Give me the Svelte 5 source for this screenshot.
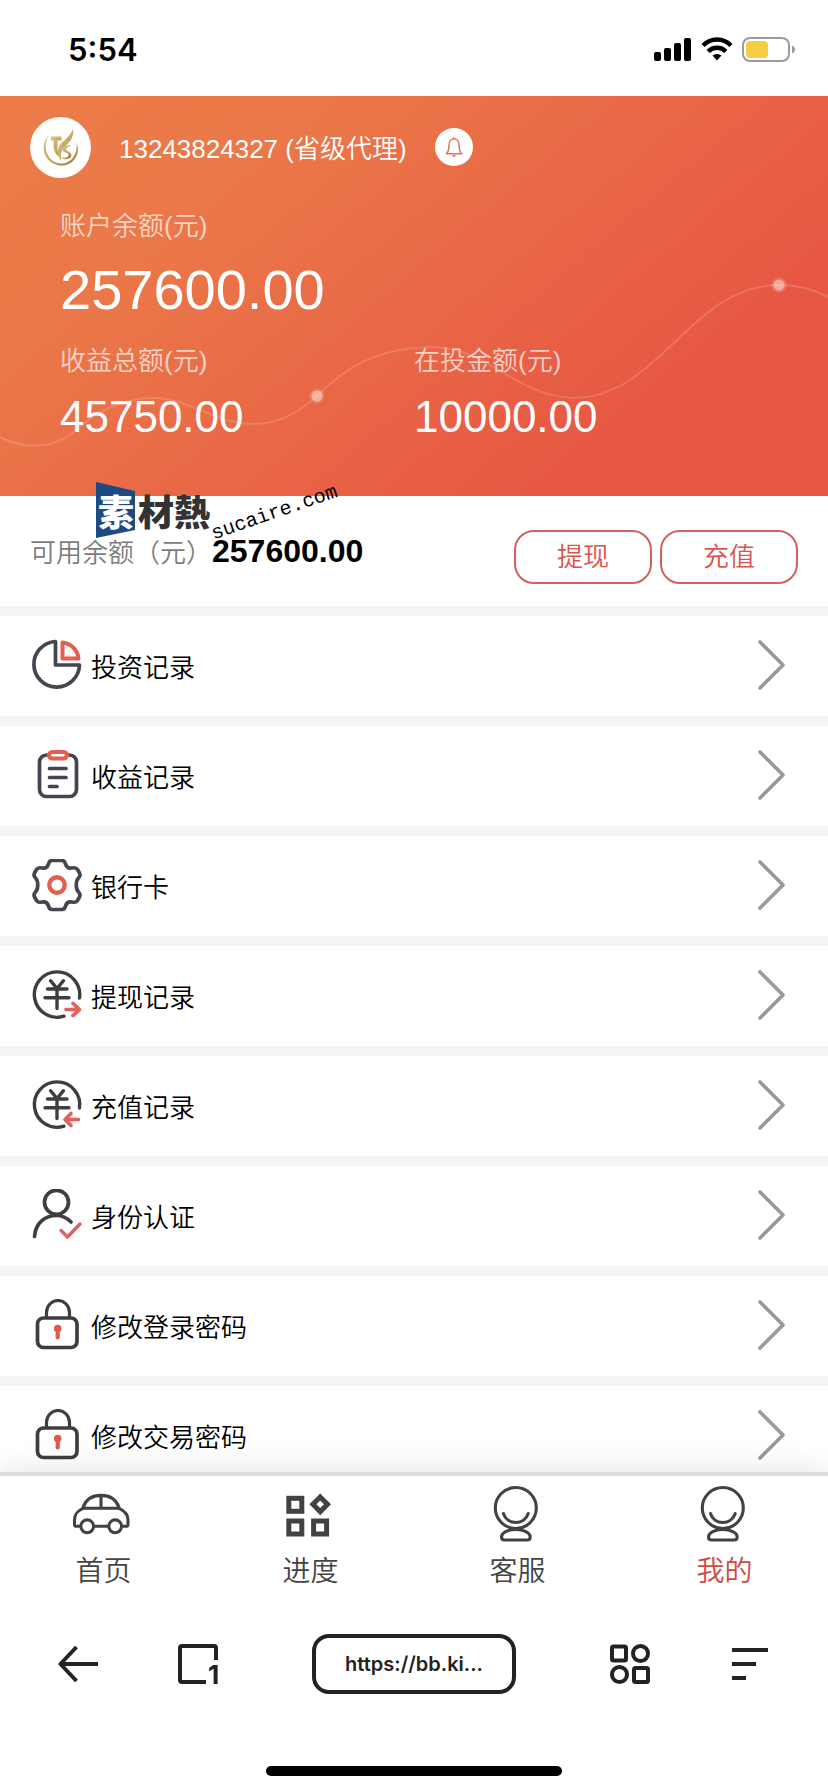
<script>
  const dark = '#45454f';
  const records = [
    { id: 'pie', label: '投资记录' },
    { id: 'clipboard', label: '收益记录' },
    { id: 'gear', label: '银行卡' },
    { id: 'withdraw', label: '提现记录' },
    { id: 'deposit', label: '充值记录' },
    { id: 'person', label: '身份认证' },
    { id: 'lock', label: '修改登录密码' },
    { id: 'lock', label: '修改交易密码' }
  ];
  const tabs = [
    { id: 'car', label: '首页' },
    { id: 'blocks', label: '进度' },
    { id: 'face', label: '客服' },
    { id: 'face', label: '我的', active: true }
  ];
</script>

<div class="app">
  <div class="status">
    <span class="time">5:54</span>
    <div class="signals">
      <svg width="38" height="26" viewBox="0 0 38 26" aria-hidden="true">
        <rect x="0" y="15" width="7" height="9" rx="2" />
        <rect x="10" y="11" width="7" height="13" rx="2" />
        <rect x="20" y="6" width="7" height="18" rx="2" />
        <rect x="30" y="1" width="7" height="23" rx="2" />
      </svg>
      <svg width="32" height="26" viewBox="0 0 32 26" aria-hidden="true">
        <g fill="none" stroke="#000" stroke-width="4.400">
          <path d="M2 8.500 C10 0.500 22 0.500 30 8.500" />
          <path d="M7.200 14.500 C12 9.500 20 9.500 24.800 14.500" />
        </g>
        <path d="M11.500 18.600 C14 16.500 18 16.500 20.500 18.600 L16 23.500 Z" />
      </svg>
      <svg width="54" height="26" viewBox="0 0 54 26" aria-hidden="true">
        <rect x="1" y="1" width="46" height="23" rx="7" fill="none" stroke="#9b9b9b" stroke-width="2" />
        <rect x="4" y="4" width="22" height="17" rx="4" fill="#f6ce46" />
        <path d="M50 8.500 C54 10 54 15 50 16.500 Z" fill="#9b9b9b" />
      </svg>
    </div>
  </div>

  <main>
    <section class="hero">
      <svg class="wave" viewBox="0 0 828 400" preserveAspectRatio="none" aria-hidden="true">
        <path d="M0 341 C20 352 50 355 74 336 C100 312 125 302 153 302 C190 302 215 328 253 328 C280 328 300 315 317 300 C345 272 375 252 432 251 C490 252 515 300 573 302 C660 302 690 189 779 189 C800 189 815 194 828 201" fill="none" stroke="#fff" stroke-opacity=".15" stroke-width="2" />
        <g fill="#fff">
          <circle cx="317" cy="300" r="7.500" fill-opacity=".15" />
          <circle cx="317" cy="300" r="5.500" fill-opacity=".4" />
          <circle cx="779" cy="189" r="7.500" fill-opacity=".15" />
          <circle cx="779" cy="189" r="5.500" fill-opacity=".4" />
        </g>
      </svg>
      <div class="user">
        <span class="avatar">
          <svg width="40" height="52" viewBox="0 0 40 52" aria-hidden="true">
            <defs>
              <linearGradient id="gold" x1="0" y1="0" x2="1" y2="1">
                <stop offset="0" stop-color="#dcc48c" />
                <stop offset=".6" stop-color="#c7a45c" />
                <stop offset="1" stop-color="#8d7040" />
              </linearGradient>
            </defs>
            <g fill="url(#gold)">
              <path d="M8 14 C1 21 1 32 7 38.500 C15 47.500 30 47 35.500 35 C37.500 30.500 37.500 26 35.500 21.500 C37 32 31 42 21 42.500 C8 43 0 27 8 14 Z" />
              <path d="M10 15.500 H20.500 V19.500 H16.500 V26 C16.500 30 17 33 18.500 36 C14 33 12.500 29 12.500 24 V19.500 H10 Z" />
              <path d="M32 8 C30.500 13 26 17 22 20.500 C17 25 14 33 20.500 40 C18.500 33 21 28 25 24.500 C30 20 33 15 32 8 Z" />
              <path d="M31 24.500 C25 23.500 20.500 26.500 22 30 C23.500 32 27.500 31.500 27.500 34 C27 36.500 23 37.500 19.500 36 C22 39.500 30 39 30.500 34.500 C30.500 30.500 25.500 30.500 25 28.500 C25 26.500 28 25 31 24.500 Z" />
            </g>
          </svg>
        </span>
        <span class="phone">13243824327 (省级代理)</span>
        <button class="bell" aria-label="消息">
          <svg width="20" height="22" viewBox="0 0 22 24" fill="none" stroke="#e2705a" stroke-width="1.600" stroke-linejoin="round" stroke-linecap="round" aria-hidden="true">
            <path d="M2.500 19.500 H19.500 C17 17 16.500 15 16.500 10 C16.500 5.500 14 3 11 3 C8 3 5.500 5.500 5.500 10 C5.500 15 5 17 2.500 19.500 Z" />
            <path d="M11 3 V2 M10 21.500 Q11 22.500 12 21.500" />
          </svg>
        </button>
      </div>
      <div class="figures">
        <div class="figure wide">
          <span class="caption">账户余额(元)</span>
          <span class="amount large">257600.00</span>
        </div>
        <div class="figure">
          <span class="caption">收益总额(元)</span>
          <span class="amount">45750.00</span>
        </div>
        <div class="figure">
          <span class="caption">在投金额(元)</span>
          <span class="amount">10000.00</span>
        </div>
      </div>
    </section>

    <section class="balance">
      <p><span>可用余额（元）</span><strong>257600.00</strong></p>
      <div class="actions">
        <button>提现</button>
        <button>充值</button>
      </div>
      <div class="stamp">
        <svg width="40" height="56" viewBox="0 0 40 56" aria-hidden="true">
          <path d="M0 0 L39 9 V48 L0 56 Z" fill="#1d4a80" />
        </svg>
        <span class="stamp-name"><i>素</i>材熱</span>
        <span class="stamp-site">sucaire.com</span>
      </div>
    </section>

    <nav class="records">
      {#each records as item}
        <a href="#{item.id}">
          <svg width="54" height="54" viewBox="0 0 54 54" fill="none" stroke={dark} stroke-width="3.700" stroke-linecap="round" stroke-linejoin="round" aria-hidden="true">
            {#if item.id === 'pie'}
              <path d="M25.500 2.500 V26 H49.500 A22.800 22.800 0 1 1 25.500 2.500 Z" />
              <path d="M32.500 3.500 V19.500 H48.500 C47.500 11 41 4.500 32.500 3.500 Z" stroke="#e45f4f" stroke-width="4" />
            {:else if item.id === 'clipboard'}
              <rect x="9.500" y="6" width="37" height="41.500" rx="7" />
              <path d="M19.500 19.500 H36 M19.500 28.500 H36 M19.500 37.500 H27" />
              <rect x="19" y="3" width="18" height="6.500" rx="3.200" fill="#fff" stroke="#e45f4f" stroke-width="4.200" />
            {:else if item.id === 'gear'}
              <path d="M22 1.500 H32 C34 1.500 35 3 35.500 5 C36.500 8.500 39 9.500 42 9 C45 8.300 46.500 9 47.500 10.500 L49.500 14 C50.500 16 50 17.500 48.500 19 C45.500 22 45.500 30 48.500 33 C50 34.500 50.500 36 49.500 38 L47.500 41.500 C46.500 43 45 43.700 42 43 C39 42.500 36.500 43.500 35.500 47 C35 49 34 50.500 32 50.500 H22 C20 50.500 19 49 18.500 47 C17.500 43.500 15 42.500 12 43 C9 43.700 7.500 43 6.500 41.500 L4.500 38 C3.500 36 4 34.500 5.500 33 C8.500 30 8.500 22 5.500 19 C4 17.500 3.500 16 4.500 14 L6.500 10.500 C7.500 9 9 8.300 12 9 C15 9.500 17.500 8.500 18.500 5 C19 3 20 1.500 22 1.500 Z" />
              <circle cx="27" cy="26" r="7.700" stroke="#e45f4f" stroke-width="4.400" />
            {:else if item.id === 'withdraw' || item.id === 'deposit'}
              <g stroke="#3e3e3e" stroke-width="3.400">
                <path d="M49.500 29 A22.700 22.700 0 1 0 34 47.200" />
                <path d="M20.500 11.700 L27 19.500 L33.500 11.700 M17.500 20 H37 M15 28.700 H39 M27 20 V39.500" />
              </g>
              {#if item.id === 'withdraw'}
                <path d="M36 40.500 H49 M43 34.500 L49.500 40.500 L43 46.500" stroke="#e4605c" />
              {:else}
                <path d="M48.500 40.500 H35.500 M41 34.500 L35 40.500 L41 46.500" stroke="#e4605c" />
              {/if}
            {:else if item.id === 'person'}
              <g stroke="#3e3e3e">
                <circle cx="26.500" cy="13.300" r="12" />
                <path d="M4.500 47.500 C5.500 34 15 26.500 26.500 26.500 C32 26.500 37 29 41 33" />
              </g>
              <path d="M31 41.500 L37.500 48 L50 35" stroke="#e4605c" stroke-width="3.400" />
            {:else}
              <g stroke="#3e3e3e">
                <rect x="7.500" y="19" width="39.500" height="29.500" rx="6" />
                <path d="M16.500 18 V13.500 A11.500 12 0 0 1 39.500 13.500 V18" stroke-width="3.200" />
              </g>
              <circle cx="27.700" cy="29.500" r="3.800" fill="#e05a4c" stroke="none" />
              <path d="M27.700 30 V38.500" stroke="#e05a4c" stroke-width="4.200" />
            {/if}
          </svg>
          <span>{item.label}</span>
          <svg width="28" height="54" viewBox="0 0 28 54" fill="none" stroke="#999" stroke-width="3.600" stroke-linecap="round" stroke-linejoin="round" aria-hidden="true">
            <path d="M2 3 L25 26 L2 49" />
          </svg>
        </a>
      {/each}
    </nav>
  </main>

  <nav class="tabs">
    {#each tabs as tab}
      <a href="#{tab.id}" class:active={tab.active}>
        <svg width="64" height="64" viewBox="0 0 64 64" fill="none" stroke="#424242" stroke-width="3.100" stroke-linecap="round" stroke-linejoin="round" aria-hidden="true">
          {#if tab.id === 'car'}
            <path d="M11 25.500 C14 17 20 13.400 29 13.400 S44 17 47 25.500 M11 26.300 H47 M29 13.400 V26.300" />
            <path d="M11 26.300 C5 29 2.500 32 2.500 38 V42.500 Q2.500 44.300 4.500 44.300 H8.500 M22 44.300 H36.500 M50 44.300 H54 Q56 44.300 56 42.500 V38 C56 32 53 29 47 26.300" />
            <circle cx="15.200" cy="44.300" r="6.400" />
            <circle cx="43.200" cy="44.300" r="6.400" />
          {:else if tab.id === 'blocks'}
            <g stroke-width="5" stroke-linejoin="miter">
              <rect x="9.800" y="16.300" width="13" height="13" />
              <rect x="9.800" y="39" width="13" height="13" />
              <rect x="34.600" y="39" width="13" height="13" />
              <path d="M41.200 15 L48.500 22.300 L41.200 29.600 L33.900 22.300 Z" />
            </g>
          {:else}
            <circle cx="29.800" cy="26" r="20.500" />
            <path d="M17.500 31.500 C21 43.500 38.500 43.500 42.200 31.500" />
            <path d="M29.800 47.500 C22 47.500 15.500 50.500 15.500 55 Q15.500 58 18.500 58 H41.200 Q44.200 58 44.200 55 C44.200 50.500 37.500 47.500 29.800 47.500 Z" />
          {/if}
        </svg>
        <span>{tab.label}</span>
      </a>
    {/each}
  </nav>

  <div class="browser">
    <button aria-label="返回">
      <svg width="40" height="40" viewBox="0 0 40 40" fill="none" stroke="#222" stroke-width="4" aria-hidden="true">
        <path d="M40 20 H3 M18.500 3 L2.500 20 L18.500 37" stroke-linejoin="round" />
      </svg>
    </button>
    <button aria-label="标签页">
      <svg width="40" height="40" viewBox="0 0 40 40" aria-hidden="true">
        <path d="M38 16 V4 Q38 2 36 2 H4 Q2 2 2 4 V36 Q2 38 4 38 H28" fill="none" stroke="#222" stroke-width="4" />
        <text x="30" y="40" font-family="Inter, sans-serif" font-weight="700" font-size="26" fill="#222">1</text>
      </svg>
    </button>
    <button class="address">https://bb.ki...</button>
    <button aria-label="应用">
      <svg width="40" height="40" viewBox="0 0 40 40" fill="none" stroke="#222" stroke-width="4" aria-hidden="true">
        <rect x="2" y="2.500" width="14" height="14" rx="1.500" />
        <circle cx="30.500" cy="9.500" r="7.500" />
        <circle cx="9.500" cy="30.500" r="7.500" />
        <rect x="24" y="24" width="14" height="14" rx="1.500" />
      </svg>
    </button>
    <button aria-label="菜单">
      <svg width="36" height="40" viewBox="0 0 36 40" fill="none" stroke="#222" stroke-width="4" aria-hidden="true">
        <path d="M0 6 H36 M0 20 H24 M0 34 H14" />
      </svg>
    </button>
  </div>
  <div class="home"></div>
</div>

<style>
  :global(body) {
    background: #fff;
  }
  .app {
    display: flex;
    flex-direction: column;
    height: 100vh;
    font-family: 'Liberation Sans', 'Noto Sans CJK SC', sans-serif;
    font-size: 26px;
    font-weight: 350;
    line-height: 40px;
    color: #000;
    overflow: hidden;
  }
  .app * {
    box-sizing: border-box;
  }
  svg {
    display: block;
    flex: none;
  }
  a {
    color: inherit;
    text-decoration: none;
  }
  button {
    font: inherit;
    color: inherit;
    background: none;
    border: 0;
    padding: 0;
    margin: 0;
  }
  .status {
    flex: none;
    display: flex;
    align-items: center;
    justify-content: space-between;
    height: 96px;
    padding: 4px 32px 0 68px;
  }
  .time {
    font: 600 31px/40px Inter, sans-serif;
  }
  .signals {
    display: flex;
    gap: 9px;
  }
  main {
    flex: 1;
    min-height: 0;
    overflow: hidden;
  }
  .hero {
    position: relative;
    height: 400px;
    padding-top: 20px;
    color: #fff;
    background: linear-gradient(140deg, #ec7c4a 0%, #eb7848 25%, #e96746 52%, #e75844 78%, #e75543 100%);
  }
  .wave {
    position: absolute;
    inset: 0;
    width: 100%;
    height: 100%;
  }
  .user {
    position: relative;
    display: flex;
    align-items: center;
    height: 62px;
    padding-left: 30px;
  }
  .avatar {
    display: grid;
    place-items: center;
    width: 61px;
    height: 61px;
    border-radius: 50%;
    background: #fff;
  }
  .phone {
    margin: 4px 28px 0 28px;
  }
  .bell {
    display: grid;
    place-items: center;
    width: 38px;
    height: 38px;
    border-radius: 50%;
    background: #fff;
  }
  .figures {
    position: relative;
    display: grid;
    grid-template-columns: 1fr 1fr;
    row-gap: 8px;
    padding-top: 28px;
  }
  .figure {
    display: flex;
    flex-direction: column;
    padding-left: 60px;
  }
  .figure:last-child {
    padding-left: 0;
  }
  .wide {
    grid-column: 1 / -1;
  }
  .caption {
    color: rgba(255, 255, 255, 0.7);
  }
  .amount {
    font-size: 44px;
    line-height: 72px;
  }
  .large {
    font-size: 56px;
    line-height: 87px;
  }
  .balance {
    position: relative;
    display: flex;
    align-items: center;
    justify-content: space-between;
    height: 110px;
    padding: 0 30px;
  }
  .balance p {
    margin: 0;
    padding-top: 2px;
    color: #7c7c7c;
  }
  .balance strong {
    font-size: 32px;
    color: #000;
  }
  .actions {
    display: flex;
    gap: 8px;
    padding-top: 12px;
  }
  .actions button {
    width: 138px;
    height: 54px;
    border: 2px solid #d4605a;
    border-radius: 20px;
    color: #d9544c;
  }
  .stamp {
    position: absolute;
    left: 96px;
    top: -14px;
    display: flex;
  }
  .stamp-name {
    position: absolute;
    left: 2px;
    top: 8px;
    font: 900 36px/40px 'Noto Sans CJK TC', sans-serif;
    color: #333;
    white-space: nowrap;
  }
  .stamp-name i {
    font-style: normal;
    color: #fff;
    padding-right: 4px;
  }
  .stamp-site {
    position: absolute;
    left: 120px;
    top: 40px;
    font: 20px/24px 'Liberation Mono', monospace;
    transform: rotate(-19deg);
    transform-origin: left bottom;
  }
  .records a {
    display: flex;
    align-items: center;
    gap: 7px;
    height: 110px;
    padding: 0 42px 0 30px;
    border-top: 10px solid #f4f4f4;
  }
  .records span {
    flex: 1;
    padding-top: 4px;
  }
  .tabs {
    position: relative;
    flex: none;
    display: grid;
    grid-template-columns: repeat(4, 1fr);
    border-top: 4px solid #dcdcdc;
    background: #fff;
    box-shadow: 0 0 30px rgba(0, 0, 0, 0.12);
    clip-path: inset(-40px 0 0 0);
    font-size: 28px;
    color: #444;
  }
  .tabs a {
    display: flex;
    flex-direction: column;
    align-items: center;
    gap: 6px;
    padding-top: 6px;
  }
  .tabs .active {
    color: #d0483f;
  }
  .browser {
    flex: none;
    display: grid;
    grid-template-columns: 120px 120px 1fr 120px 120px;
    place-items: center;
    padding: 42px 18px 0;
  }
  .address {
    width: 204px;
    height: 60px;
    border: 4px solid #222;
    border-radius: 17px;
    font: 600 20px/28px Inter, sans-serif;
    color: #222;
  }
  .home {
    flex: none;
    align-self: center;
    width: 296px;
    height: 10px;
    margin: 72px 0 16px;
    border-radius: 5px;
    background: #000;
  }
</style>
